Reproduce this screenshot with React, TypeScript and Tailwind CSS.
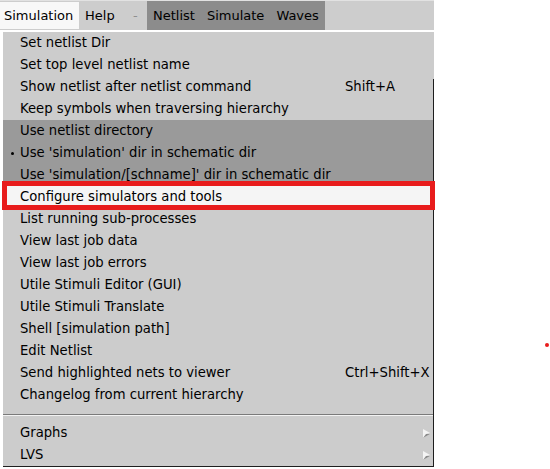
import React from "react";

type Item = { label: string; shortcut?: string; bullet?: boolean; sub?: boolean; tone?: "dark" | "active" };

const top: Item[] = [
  { label: "Set netlist Dir" },
  { label: "Set top level netlist name" },
  { label: "Show netlist after netlist command", shortcut: "Shift+A" },
  { label: "Keep symbols when traversing hierarchy" },
  { label: "Use netlist directory", tone: "dark" },
  { label: "Use 'simulation' dir in schematic dir", tone: "dark", bullet: true },
  { label: "Use 'simulation/[schname]' dir in schematic dir", tone: "dark" },
  { label: "Configure simulators and tools", tone: "active" },
  { label: "List running sub-processes" },
  { label: "View last job data" },
  { label: "View last job errors" },
  { label: "Utile Stimuli Editor (GUI)" },
  { label: "Utile Stimuli Translate" },
  { label: "Shell [simulation path]" },
  { label: "Edit Netlist" },
  { label: "Send highlighted nets to viewer", shortcut: "Ctrl+Shift+X" },
  { label: "Changelog from current hierarchy" },
];

const bottom: Item[] = [
  { label: "Graphs", sub: true },
  { label: "LVS", sub: true },
];

function Arrow() {
  return (
    <svg width="8" height="9" viewBox="0 0 8 9" className="mr-[3px] shrink-0">
      <polygon points="0,0 8,4.5 0,9" fill="#f4f4f4" />
      <polygon points="0,9 8,4.5 3,5" fill="#8a8a8a" />
    </svg>
  );
}

function Row({ item }: { item: Item }) {
  const bg =
    item.tone === "dark" ? "bg-[#9a9a9a]" : item.tone === "active" ? "bg-[#f5f5f5]" : "";
  return (
    <div className={`relative flex h-[22px] items-center leading-[22px] pl-[17px] ${bg}`}>
      {item.bullet && (
        <div className="absolute left-[8px] top-[10px] h-[3px] w-[3px] rounded-full bg-black" />
      )}
      <span className="w-[325px] shrink-0 whitespace-nowrap">{item.label}</span>
      <span className="flex flex-1 justify-end whitespace-nowrap">
        {item.shortcut && <span className="mr-auto">{item.shortcut}</span>}
        {item.sub && <Arrow />}
      </span>
    </div>
  );
}

export default function App() {
  return (
    <div
      className="relative h-[469px] w-[550px] overflow-hidden bg-white text-[13.2px] text-black"
      style={{ fontFamily: "'DejaVu Sans', sans-serif" }}
    >
      {/* menubar */}
      <div className="flex h-[30px] w-[434px] items-stretch border-t border-[#e2e2e2] bg-[#cdcdcd] text-[13px]">
        <div className="my-[1px] flex w-[79px] items-center bg-[#f8f8f8] pl-[4px]">Simulation</div>
        <div className="flex w-[42px] items-center pl-[6px]">Help</div>
        <div className="flex w-[26px] items-center pl-[12px] text-[#8f8f8f]">-</div>
        <div className="flex items-stretch bg-[#8c8c8c]">
          <div className="flex items-center px-[6px]">Netlist</div>
          <div className="flex items-center px-[6px]">Simulate</div>
          <div className="flex items-center px-[6px]">Waves</div>
        </div>
      </div>

      {/* dropdown menu */}
      <div className="absolute left-[3px] top-[31px] w-[431px] border-t border-white border-b border-b-[#1e1e1e] bg-[#cccccc]">
        {top.map((it) => (
          <Row key={it.label} item={it} />
        ))}
        <div className="h-[16px] pt-[8px]">
          <div className="h-px bg-[#7a7a7a]" />
          <div className="h-px bg-[#f2f2f2]" />
        </div>
        {bottom.map((it) => (
          <Row key={it.label} item={it} />
        ))}
        <div className="absolute right-0 top-[47px] bottom-0 w-px bg-[#1e1e1e]" />
      </div>

      {/* highlight annotation */}
      <div className="absolute left-[2px] top-[181px] h-[29px] w-[433px] border-[5px] border-[#e81c1c]" />

      {/* stray dot */}
      <div className="absolute left-[545px] top-[343px] h-[4px] w-[4px] rounded-full bg-[#e81c1c]" />
    </div>
  );
}
